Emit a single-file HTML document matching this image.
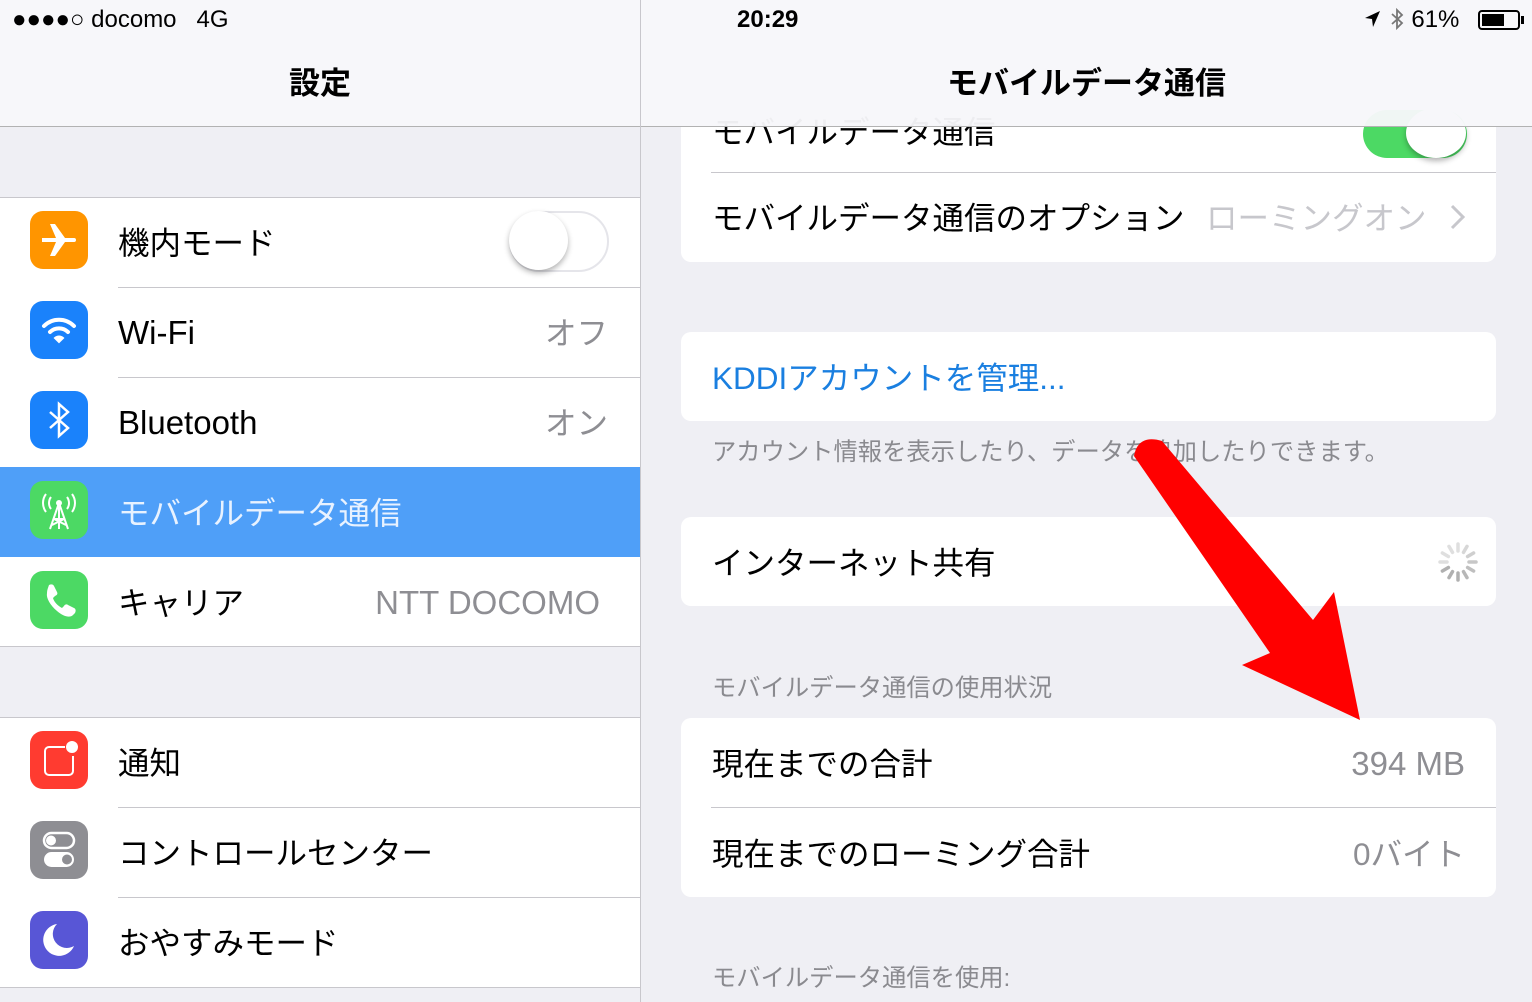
<!DOCTYPE html>
<html><head><meta charset="utf-8"><style>
*{margin:0;padding:0;box-sizing:border-box}
body{width:1532px;height:1002px;overflow:hidden;background:#efeff4;position:relative;font-family:"Liberation Sans","Noto Sans CJK JP",sans-serif;color:#000}
.a{position:absolute}
.t{position:absolute;font-size:31.5px;line-height:40px;white-space:nowrap;margin-top:2px}
.l{font-size:33px}
.g{color:#8e8e93}
.row{position:absolute;left:0;width:640px;height:90px;background:#fff}
.ic{position:absolute;left:30px;width:58px;height:58px;border-radius:13px}
.sep{position:absolute;height:1px;background:#c8c7cc}
.card{position:absolute;left:681px;width:815px;background:#fff;border-radius:10px}
.small{position:absolute;font-size:24.3px;color:#8a8a8f;white-space:nowrap;line-height:30px}
</style></head><body>
<div class="a" style="left:640px;top:0;width:1px;height:1002px;background:#c8c7cc;z-index:5"></div>
<div class="row" style="top:197px;height:450px"></div>
<div class="sep" style="left:0;top:197px;width:640px"></div>
<div class="a" style="left:0;top:467px;width:640px;height:90px;background:#4f9ff8"></div>
<div class="sep" style="left:118px;top:287px;width:522px"></div>
<div class="sep" style="left:118px;top:377px;width:522px"></div>
<div class="sep" style="left:0;top:646px;width:640px"></div>
<div class="row" style="top:717px;height:270px"></div>
<div class="sep" style="left:0;top:717px;width:640px"></div>
<div class="sep" style="left:118px;top:807px;width:522px"></div>
<div class="sep" style="left:118px;top:897px;width:522px"></div>
<div class="sep" style="left:0;top:987px;width:640px"></div>

<div class="ic" style="top:211px;background:#ff9500"><svg width="58" height="58" viewBox="0 0 58 58"><path d="M12 27h14l-6-14h5l10 14h9a2 2 0 0 1 0 4h-9l-10 14h-5l6-14H12z" fill="#fff"/></svg></div>
<div class="t" style="left:118px;top:221px">機内モード</div>
<div class="a" style="left:509px;top:211px;width:100px;height:61px;border-radius:31px;border:2px solid #e5e5ea;background:#fff"></div>
<div class="a" style="left:509px;top:211px;width:59px;height:59px;border-radius:50%;background:#fff;box-shadow:0 3px 6px rgba(0,0,0,.3)"></div>

<div class="ic" style="top:301px;background:#1a82fb"><svg width="58" height="58" viewBox="0 0 58 58" fill="none" stroke="#fff" stroke-width="4" stroke-linecap="round"><path d="M14 25a21 21 0 0 1 30 0"/><path d="M20 31a13 13 0 0 1 18 0"/><path d="M25 37l4 4 4-4a6 6 0 0 0-8 0z" fill="#fff" stroke-width="2"/></svg></div>
<div class="t l" style="left:118px;top:311px">Wi-Fi</div>
<div class="t g" style="right:924px;top:311px">オフ</div>

<div class="ic" style="top:391px;background:#1a82fb"><svg width="58" height="58" viewBox="0 0 58 58" fill="none" stroke="#fff" stroke-width="2.5"><path d="M20 21l18 16-9 8V13l9 8-18 16"/></svg></div>
<div class="t l" style="left:118px;top:401px">Bluetooth</div>
<div class="t g" style="right:924px;top:401px">オン</div>

<div class="ic" style="top:481px;background:#4cd964"><svg width="58" height="58" viewBox="0 0 58 58" fill="none" stroke="#fff" stroke-width="2"><path d="M29 22v26M29 22l-9 26M29 22l9 26M24 38h10M22 44l12-6M36 44l-12-6"/><circle cx="29" cy="22" r="2" fill="#fff"/><path d="M21 16a10 10 0 0 0 0 12M37 16a10 10 0 0 1 0 12M16 13a15 15 0 0 0 0 18M42 13a15 15 0 0 1 0 18"/></svg></div>
<div class="t" style="left:118px;top:491px;color:#e8f2ff">モバイルデータ通信</div>

<div class="ic" style="top:571px;background:#4cd964"><svg width="58" height="58" viewBox="0 0 58 58"><path d="M19 14c2-1 4-1 5 1l3 6c1 2 0 3-2 4l-2 2c1 4 5 8 9 10l2-2c1-2 3-2 4-1l6 3c2 1 2 3 1 5l-2 2c-3 3-9 2-16-4s-11-13-10-18c0-3 1-5 2-8z" fill="#fff"/></svg></div>
<div class="t" style="left:118px;top:581px">キャリア</div>
<div class="t g l" style="right:932px;top:581px">NTT DOCOMO</div>

<div class="ic" style="top:731px;background:#ff3b30"><svg width="58" height="58" viewBox="0 0 58 58" fill="none" stroke="#fff" stroke-width="2"><path d="M35 16H19a4 4 0 0 0-4 4v20a4 4 0 0 0 4 4h20a4 4 0 0 0 4-4V25"/><circle cx="42" cy="16" r="6" fill="#fff" stroke="none"/></svg></div>
<div class="t" style="left:118px;top:741px">通知</div>

<div class="ic" style="top:821px;background:#8e8e93"><svg width="58" height="58" viewBox="0 0 58 58"><rect x="14" y="12" width="30" height="15" rx="7.5" fill="none" stroke="#fff" stroke-width="2.5"/><circle cx="21" cy="19.5" r="5" fill="#fff"/><rect x="14" y="31" width="30" height="15" rx="7.5" fill="#fff"/><circle cx="37" cy="38.5" r="5" fill="#8e8e93"/></svg></div>
<div class="t" style="left:118px;top:831px">コントロールセンター</div>

<div class="ic" style="top:911px;background:#5856d6"><svg width="58" height="58" viewBox="0 0 58 58"><path d="M27 13a16 16 0 1 0 17 22A14 14 0 0 1 27 13z" fill="#fff"/></svg></div>
<div class="t" style="left:118px;top:921px">おやすみモード</div>

<div class="card" style="top:100px;height:162px"></div>
<div class="t" style="left:712px;top:110px">モバイルデータ通信</div>
<div class="a" style="left:1363px;top:110px;width:104px;height:48px;border-radius:24px;background:#4cd964"></div>
<div class="a" style="left:1406px;top:108px;width:60px;height:50px;border-radius:50%;background:#fff;box-shadow:0 3px 6px rgba(0,0,0,.3)"></div>
<div class="sep" style="left:711px;top:172px;width:785px"></div>
<div class="t" style="left:712px;top:196px">モバイルデータ通信のオプション</div>
<div class="t" style="left:1206px;top:196px;color:#c7c7cc">ローミングオン</div>
<svg class="a" style="left:1448px;top:203px" width="20" height="28" viewBox="0 0 20 28"><path d="M4 3l11 11L4 25" fill="none" stroke="#c7c7cc" stroke-width="3"/></svg>

<div class="card" style="top:332px;height:89px"></div>
<div class="t" style="left:712px;top:356px;color:#1a7fe0">KDDIアカウントを管理...</div>
<div class="small" style="left:712px;top:438px">アカウント情報を表示したり、データを追加したりできます。</div>

<div class="card" style="top:517px;height:89px"></div>
<div class="t" style="left:712px;top:541px">インターネット共有</div>
<svg class="a" style="left:1436px;top:540px" width="44" height="44" viewBox="0 0 44 44" stroke-width="3.5" stroke-linecap="round">
<g stroke="#b0b0b0"><path d="M22 4v7" opacity=".4"/><path d="M31 6.4l-3.5 6" opacity=".5"/><path d="M37.6 13l-6 3.5" opacity=".6"/><path d="M40 22h-7" opacity=".7"/><path d="M37.6 31l-6-3.5" opacity=".8"/><path d="M31 37.6l-3.5-6" opacity=".9"/><path d="M22 40v-7"/><path d="M13 37.6l3.5-6"/><path d="M6.4 31l6-3.5"/><path d="M4 22h7" opacity=".4"/><path d="M6.4 13l6 3.5" opacity=".4"/><path d="M13 6.4l3.5 6" opacity=".4"/></g></svg>

<div class="small" style="left:712px;top:674px">モバイルデータ通信の使用状況</div>
<div class="card" style="top:718px;height:179px"></div>
<div class="t" style="left:712px;top:742px">現在までの合計</div>
<div class="t g l" style="right:67px;top:742px">394 MB</div>
<div class="sep" style="left:711px;top:807px;width:785px"></div>
<div class="t" style="left:712px;top:832px">現在までのローミング合計</div>
<div class="t g" style="right:67px;top:832px">0バイト</div>
<div class="small" style="left:712px;top:964px">モバイルデータ通信を使用:</div>

<div class="a" style="left:0;top:0;width:1532px;height:127px;background:rgba(247,247,250,.96);border-bottom:1px solid #b2b2b2;z-index:4"></div>
<div class="a" style="left:12px;top:5px;font-size:24px;line-height:30px;z-index:6;white-space:nowrap">●●●●○ docomo&nbsp;&nbsp;&nbsp;4G</div>
<div class="a" style="left:737px;top:5px;font-size:24px;line-height:30px;font-weight:bold;z-index:6">20:29</div>
<div class="a" style="left:1362px;top:5px;font-size:24px;line-height:30px;z-index:6;white-space:nowrap">
<svg width="20" height="24" viewBox="0 0 20 24" style="vertical-align:-4px"><path d="M18 4L3 11l7 1 1 8z" fill="#000"/></svg>
<svg width="16" height="24" viewBox="0 0 16 24" style="vertical-align:-4px"><path d="M3 7l10 9-5 5V3l5 5-10 9" fill="none" stroke="#777" stroke-width="1.8"/></svg>
61%</div>
<div class="a" style="left:1478px;top:10px;width:42px;height:20px;border:2px solid #000;border-radius:4px;z-index:6"><div style="position:absolute;left:2px;top:2px;width:22px;height:12px;background:#000"></div></div>
<div class="a" style="left:1521px;top:16px;width:3px;height:8px;background:#000;z-index:6"></div>
<div class="a" style="left:0;top:64px;width:640px;text-align:center;font-size:31px;line-height:40px;font-weight:bold;z-index:6">設定</div>
<div class="a" style="left:641px;top:64px;width:891px;text-align:center;font-size:31px;line-height:40px;font-weight:bold;z-index:6">モバイルデータ通信</div>

<svg class="a" style="left:0;top:0;z-index:7" width="1532" height="1002"><path d="M1134 456Q1138 434 1162 441L1313 620L1334 592L1360 720L1242 665L1270 653Z" fill="#ff0000"/></svg>
</body></html>
